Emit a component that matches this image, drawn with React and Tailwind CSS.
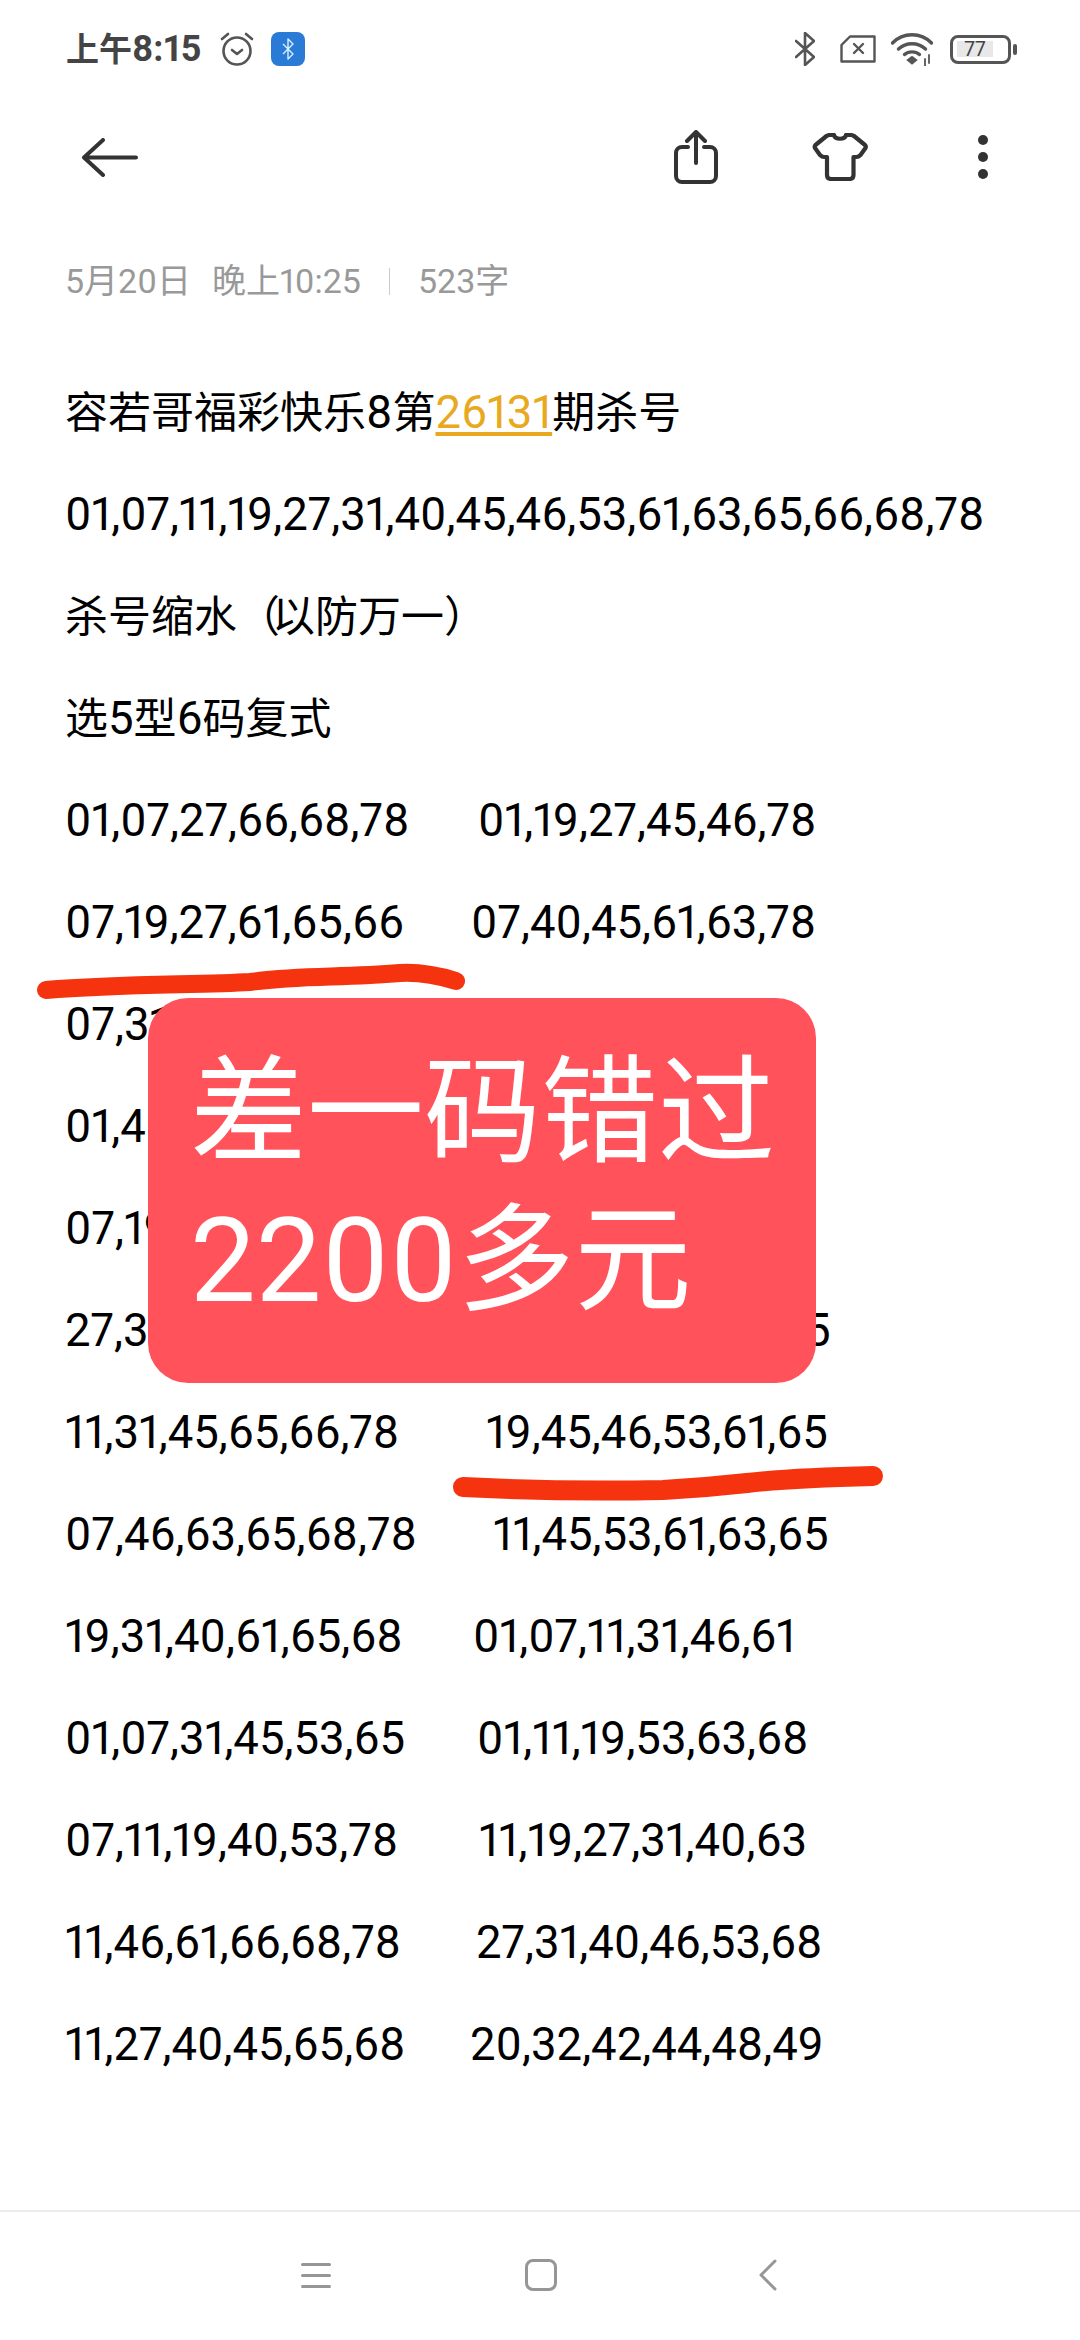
const rows = [
  { a: '01,07,27,66,68,78', b: '01,19,27,45,46,78', col: 'w-[413px]' },
  { a: '07,19,27,61,65,66', b: '07,40,45,61,63,78', col: 'w-[406px]' },
  { a: '07,31' },
  { a: '01,46' },
  { a: '07,19' },
  { a: '27,31', b: '65', col: 'w-[714px]' },
  { a: '11,31,45,65,66,78', b: '19,45,46,53,61,65', col: 'w-[421px]' },
  { a: '07,46,63,65,68,78', b: '11,45,53,61,63,65', col: 'w-[428px]' },
  { a: '19,31,40,61,65,68', b: '01,07,11,31,46,61', col: 'w-[408px]' },
  { a: '01,07,31,45,53,65', b: '01,11,19,53,63,68', col: 'w-[412px]' },
  { a: '07,11,19,40,53,78', b: '11,19,27,31,40,63', col: 'w-[414px]' },
  { a: '11,46,61,66,68,78', b: '27,31,40,46,53,68', col: 'w-[411px]' },
  { a: '11,27,40,45,65,68', b: '20,32,42,44,48,49', col: 'w-[405px]' },
];

function StatusBar() {
  return (
    <div className="flex h-[98px] items-center pl-[66px] text-[#444]">
      <span className="w-[137px] text-[33px] font-bold leading-none whitespace-nowrap">
        上午<span className="text-[36px]">8:15</span>
      </span>
      <svg className="ml-[16px] h-[36px] w-[36px]" viewBox="0 0 36 36" fill="none" stroke="#555" strokeWidth="2.6" strokeLinecap="round" strokeLinejoin="round">
        <circle cx="18" cy="20" r="13.5" />
        <path d="M13 19l5 4 5-4" />
        <path d="M3 8l6-5M33 8l-6-5" />
      </svg>
      <div className="ml-[16px] flex h-[34px] w-[34px] items-center justify-center rounded-[8px] bg-[#2a7bd6]">
        <svg className="h-[22px] w-[14px]" viewBox="0 0 14 22" fill="none" stroke="#d8f0ff" strokeWidth="1.4" strokeLinejoin="round">
          <path d="M2 6l10 10-5 5V1l5 5L2 16" />
        </svg>
      </div>
      <svg className="ml-[490px] h-[34px] w-[20px]" viewBox="0 0 20 34" fill="none" stroke="#555" strokeWidth="2.6" strokeLinecap="round" strokeLinejoin="round">
        <path d="M1 9l18 16-9 8V1l9 8L1 25" />
      </svg>
      <svg className="ml-[25px] h-[28px] w-[36px]" viewBox="0 0 36 28" fill="none" stroke="#555" strokeWidth="2.4" strokeLinejoin="round">
        <path d="M10 1.5h24.5v25H1.5V10z" />
        <path d="M14 9l9 9M23 9l-9 9" strokeLinecap="round" />
      </svg>
      <svg className="ml-[15px] h-[33px] w-[42px]" viewBox="0 0 42 33" fill="none" stroke="#555" strokeWidth="3.4" strokeLinecap="round">
        <path d="M1.5 10C12 -1 30 -1 40.5 10" />
        <path d="M7.5 16c7.500-7 19.500-7 27 0" />
        <path d="M13.500 21.500c4-3.500 11-3.500 15 0" />
        <path d="M18 27l3-2.200 3 2.200-3 2.500z" fill="#555" />
        <path d="M34 26v7M38 22v8" strokeWidth="1.800" />
      </svg>
      <div className="ml-[17px] flex h-[29px] w-[61px] items-center rounded-[8px] border-[3px] border-[#555] pl-[4px]">
        <div className="flex h-[16px] w-[36px] items-center justify-center bg-[#e8e8e8] text-[21px] leading-none text-[#444]">77</div>
      </div>
      <div className="ml-[2px] h-[11px] w-[4px] rounded-[2px] bg-[#555]" />
    </div>
  );
}

function Toolbar() {
  return (
    <div className="flex h-[118px] items-center pl-[82px]">
      <svg className="h-[39px] w-[56px]" viewBox="0 0 56 39" fill="none" stroke="#333" strokeWidth="4" strokeLinecap="round" strokeLinejoin="round">
        <path d="M54 19.500H2M21 2L2 19.500 21 37" />
      </svg>
      <svg className="ml-[536px] h-[54px] w-[44px]" viewBox="0 0 44 54" fill="none" stroke="#333" strokeWidth="4" strokeLinecap="round" strokeLinejoin="round">
        <path d="M14 17H8a6 6 0 0 0-6 6v23a6 6 0 0 0 6 6h28a6 6 0 0 0 6-6V23a6 6 0 0 0-6-6h-6" />
        <path d="M22 33V3M13 11l9-9 9 9" />
      </svg>
      <svg className="ml-[94px] h-[48px] w-[56px]" viewBox="0 0 56 48" fill="none" stroke="#333" strokeWidth="4.200" strokeLinecap="round" strokeLinejoin="round">
        <path d="M22 2c1 5 11 5 12 0h5c1 0 2 .5 3 1l11 9c1 1 1 2 .5 3l-5 7c-1 1-2 2-4 2h-3v18c0 3-2 4-4 4H19c-2 0-4-1-4-4V24h-3c-2 0-3-1-4-2l-5-7c-.5-1-.5-2 .5-3l11-9c1-.5 2-1 3-1z" />
      </svg>
      <div className="ml-[110px] flex flex-col gap-[7px]">
        <div className="h-[10px] w-[10px] rounded-full bg-[#333]" />
        <div className="h-[10px] w-[10px] rounded-full bg-[#333]" />
        <div className="h-[10px] w-[10px] rounded-full bg-[#333]" />
      </div>
    </div>
  );
}

function NavBar() {
  return (
    <div className="absolute inset-x-0 bottom-0 flex h-[130px] items-center border-t-2 border-[#ececec] pb-[2px] pl-[301px]">
      <div className="flex w-[30px] flex-col gap-[8px]">
        <div className="h-[3px] rounded-full bg-[#969696]" />
        <div className="h-[3px] rounded-full bg-[#969696]" />
        <div className="h-[3px] rounded-full bg-[#969696]" />
      </div>
      <div className="ml-[194px] h-[32px] w-[32px] rounded-[8px] border-[3px] border-[#969696]" />
      <svg className="ml-[202px] h-[32px] w-[18px]" viewBox="0 0 18 32" fill="none" stroke="#969696" strokeWidth="3" strokeLinecap="round" strokeLinejoin="round">
        <path d="M16 2L2 16l14 14" />
      </svg>
    </div>
  );
}

export default function App() {
  return (
    <div className="relative h-[2340px] w-[1080px] overflow-hidden bg-white font-['Roboto','Noto_Sans_CJK_SC',sans-serif] proportional-nums">
      <StatusBar />
      <Toolbar />

      <div className="flex h-[130px] items-center pl-[65px] text-[34px] leading-none text-[#999]">
        <span>5月20日</span>
        <span className="ml-[21px]">晚上10:25</span>
        <div className="ml-[28px] h-[27px] w-[1px] bg-[#ccc]" />
        <span className="ml-[28px]">523字</span>
      </div>

      <div className="mt-[16px] pl-[65px] text-[45.5px] leading-[102px] whitespace-pre text-black">
        <p className="h-[102px] text-[43px]">
          容若哥福彩快乐<span className="text-[45.5px]">8</span>第
          <span className="text-[45.5px] text-[#e8a91f] underline underline-offset-4">26131</span>期杀号
        </p>
        <p className="h-[102px]">01,07,11,19,27,31,40,45,46,53,61,63,65,66,68,78</p>
        <p className="flex h-[102px] text-[43px]">
          <span>杀号缩水（</span>
          <span className="-ml-[8px]">以防万一）</span>
        </p>
        <p className="h-[102px] text-[43px]">选<span className="text-[45.5px]">5</span>型<span className="text-[45.5px]">6</span>码复式</p>
        {rows.map((row, i) => (
          <p key={i} className="flex h-[102px]">
            <span className={row.col}>{row.a}</span>
            {row.b && <span>{row.b}</span>}
          </p>
        ))}
      </div>

      {/* hand-drawn marks over the text */}
      <svg className="absolute inset-0 h-[2340px] w-[1080px]" viewBox="0 0 1080 2340" fill="none" stroke="#f5330f" strokeLinecap="round" strokeLinejoin="round">
        <path strokeWidth="18" d="M46 990C120 984 200 985 250 982C300 975 340 978 400 973C420 972 440 976 456 981" />
        <path strokeWidth="20" d="M463 1487C540 1491 610 1491 663 1490C700 1488 720 1486 747 1483C790 1478 830 1477 873 1476" />
      </svg>

      <div className="absolute left-[148px] top-[998px] flex h-[385px] w-[668px] flex-col rounded-[40px] bg-[#ff525a] pl-[42px] pt-[41px] text-[117px] leading-[148px] text-white">
        <span>差一码错过</span>
        <span>2200多元</span>
      </div>

      <NavBar />
    </div>
  );
}
